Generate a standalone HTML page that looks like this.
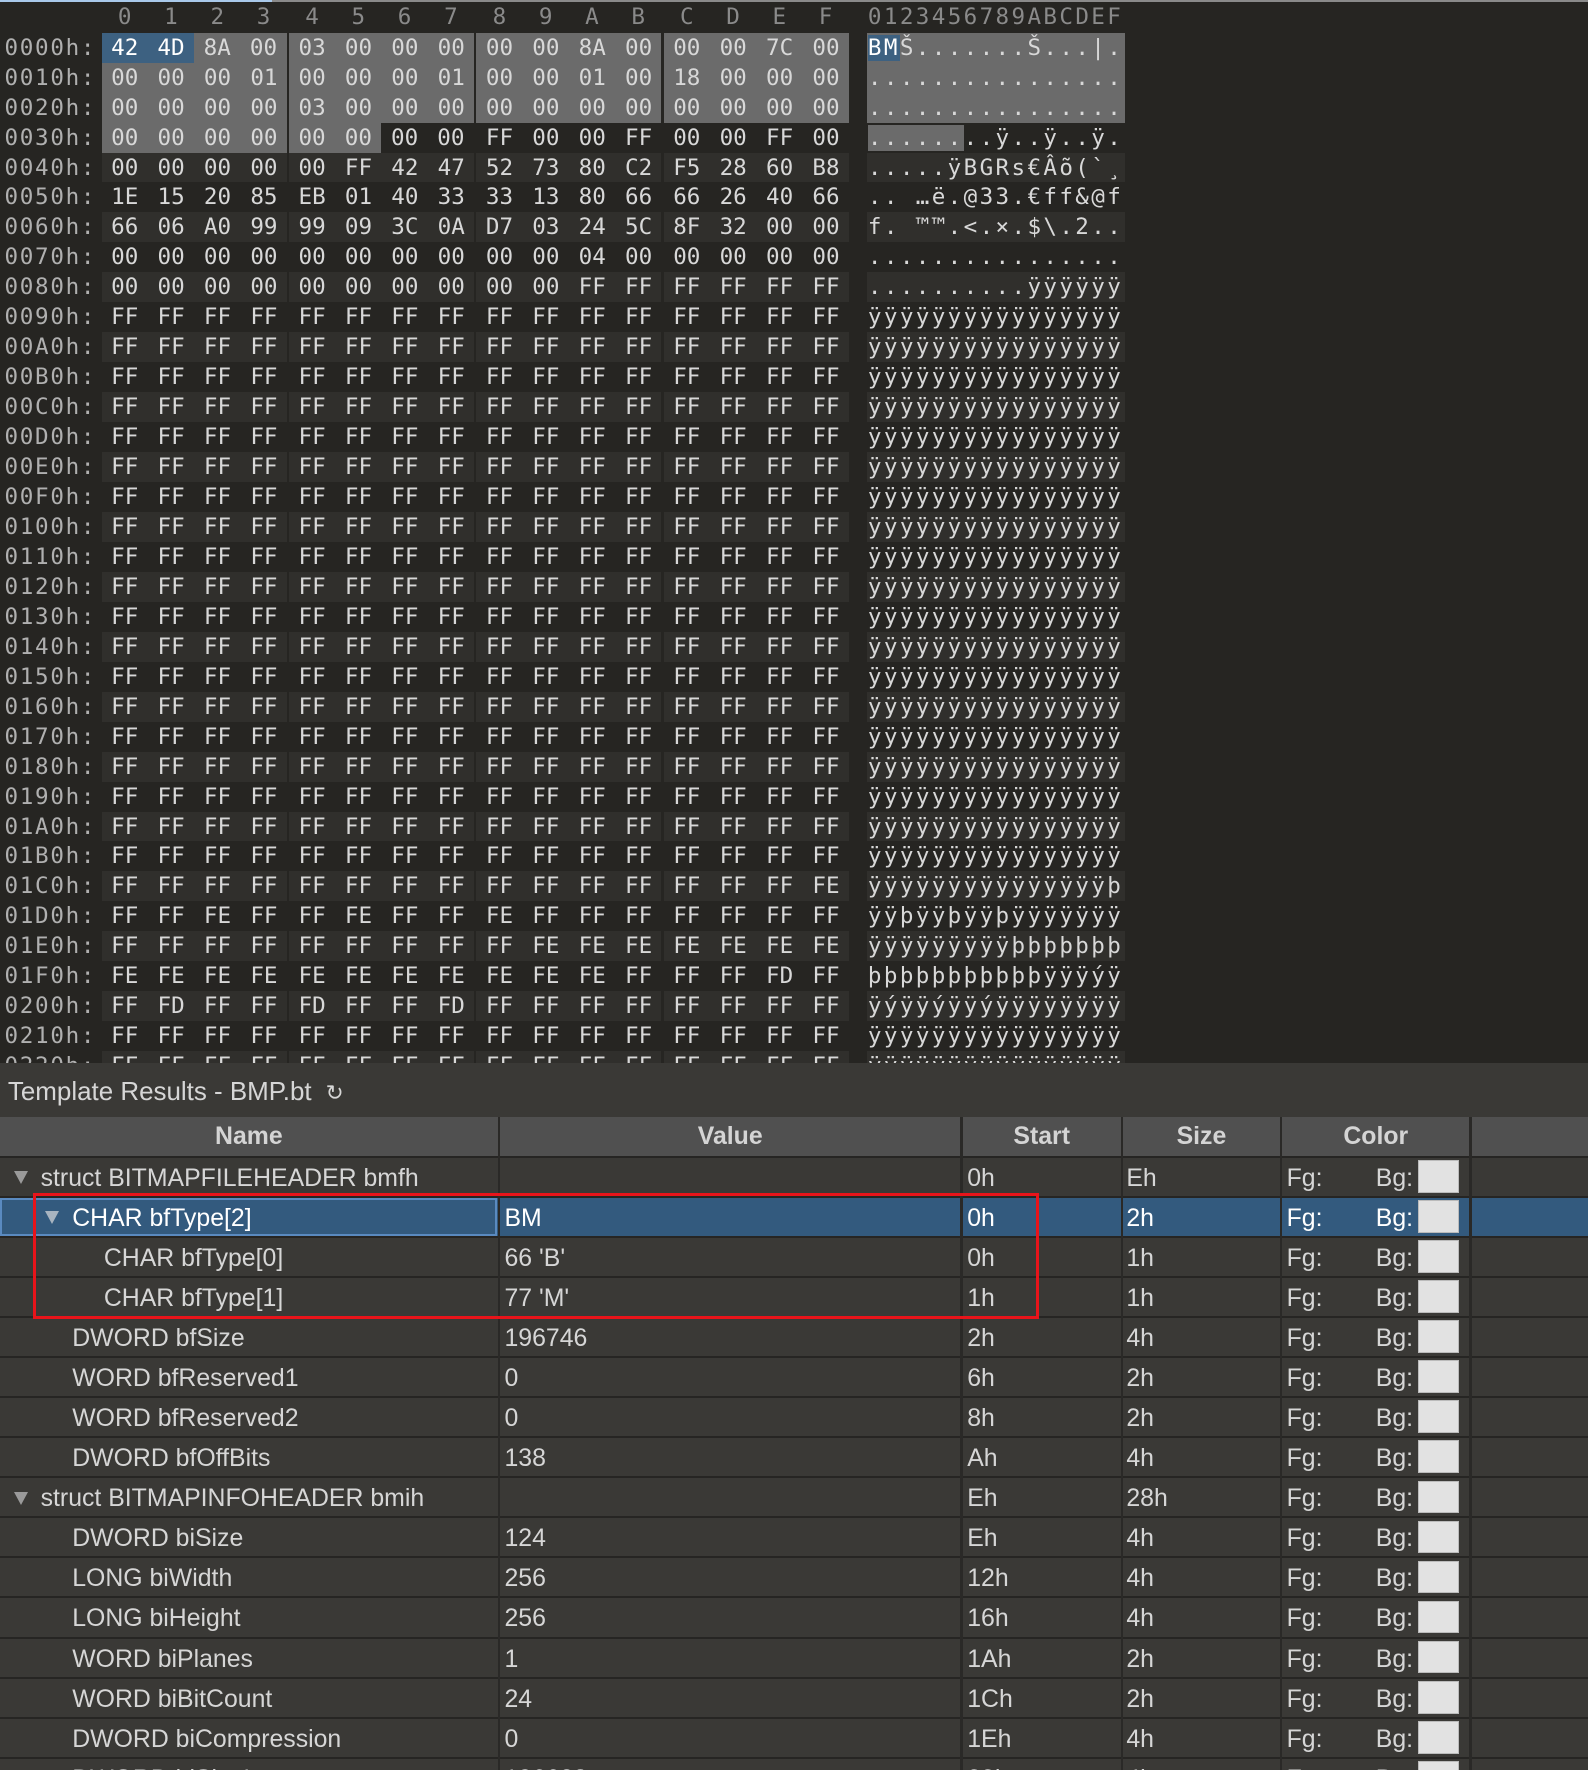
<!DOCTYPE html>
<html><head><meta charset="utf-8">
<style>
html,body{margin:0;padding:0;background:#3a3936;overflow:hidden}
body{width:1407px;height:1568px;zoom:1.12864;position:relative;font-family:"Liberation Sans",sans-serif}
#hex{position:absolute;left:0;top:0;width:1407px;height:942px;background:#262522;overflow:hidden;font-family:"DejaVu Sans Mono","Liberation Mono",monospace;font-size:20px;color:#d8d8d8}
#topline{position:absolute;left:0;top:0;height:2px;width:1407px;background:#8a8a8a}
#topline i{position:absolute;left:0;top:0;height:2px;width:241px;background:#a9c9ea}
.hdr{position:absolute;top:0;height:28px;line-height:31px;color:#8a8a8a}
.hdr span{position:absolute;width:41px;text-align:center}
#rows{position:absolute;left:0;top:29px}
.r{position:relative;height:26.55px;line-height:28px;white-space:pre}
.a{position:absolute;left:4px;color:#b0b0b0;letter-spacing:1.5px}
.g{position:absolute;width:164px;padding-left:8.5px;box-sizing:border-box;word-spacing:5px;height:26.55px}
.g0{left:90px}.g1{left:256px}.g2{left:422px}.g3{left:588px}
.s{position:absolute;left:768px;width:228px;padding-left:1px;letter-spacing:2.1px;height:26.55px}
.e .g,.e .s{background:#302f2c}
.h .g,.h .s{background:#6b6b6b}
.b{position:absolute;top:0;height:26.55px;width:41px;text-align:center;word-spacing:0}
.gy{background:#6b6b6b}.bl{background:#3d6181;color:#fff}.dk{background:#302f2c}
#title{position:absolute;left:7px;top:955px;font-size:23px;color:#d6d6d6}
#tbl{position:absolute;left:0;top:990px;width:1407px}
.th{position:absolute;top:0;height:34px;line-height:35px;background:#505050;font-weight:bold;font-size:22px;color:#d4d4d4;text-align:center}
.tr{position:absolute;left:0;width:1407px;height:33.5px;line-height:37px;font-size:22px;color:#d6d6d6;border-top:2px solid #262523}
.tr span{position:absolute;top:0}
.tri{display:inline-block;width:0;height:0;border-left:7px solid transparent;border-right:7px solid transparent;border-top:12px solid #9a9a9a;position:absolute;top:12px}
.sw{position:absolute;left:1256px;top:2px;width:37px;height:29px;background:#e2e2e2;border:1px solid #bbb;box-sizing:border-box}
.vl{position:absolute;top:0;width:2px;height:578px;background:#2a2927}
.sel{background:#335a7e;color:#fff}
</style></head><body>
<div id="hex">
<div id="topline"><i></i></div>
<div class="hdr" style="left:90px;width:700px">
<span style="left:0">0</span><span style="left:41px">1</span><span style="left:82px">2</span><span style="left:123px">3</span>
<span style="left:166px">4</span><span style="left:207px">5</span><span style="left:248px">6</span><span style="left:289px">7</span>
<span style="left:332px">8</span><span style="left:373px">9</span><span style="left:414px">A</span><span style="left:455px">B</span>
<span style="left:498px">C</span><span style="left:539px">D</span><span style="left:580px">E</span><span style="left:621px">F</span>
</div>
<div class="hdr" style="left:769px;letter-spacing:2.1px">0123456789ABCDEF</div>
<div id="rows">
<div class="r h"><span class="a">0000h:</span><span class="g g0"><span class="b bl" style="left:0">42</span><span class="b bl" style="left:41px">4D</span><span class="b" style="left:82px">8A</span><span class="b" style="left:123px">00</span></span><span class="g g1">03 00 00 00</span><span class="g g2">00 00 8A 00</span><span class="g g3">00 00 7C 00</span><span class="s"><span style="background:#3d6181;color:#fff">BM</span>Š.......Š...|.</span></div>
<div class="r h"><span class="a">0010h:</span><span class="g g0">00 00 00 01</span><span class="g g1">00 00 00 01</span><span class="g g2">00 00 01 00</span><span class="g g3">18 00 00 00</span><span class="s">................</span></div>
<div class="r h"><span class="a">0020h:</span><span class="g g0">00 00 00 00</span><span class="g g1">03 00 00 00</span><span class="g g2">00 00 00 00</span><span class="g g3">00 00 00 00</span><span class="s">................</span></div>
<div class="r"><span class="a">0030h:</span><span class="g g0 gy">00 00 00 00</span><span class="g g1"><span class="b gy" style="left:0">00</span><span class="b gy" style="left:41px">00</span><span class="b" style="left:82px">00</span><span class="b" style="left:123px">00</span></span><span class="g g2">FF 00 00 FF</span><span class="g g3">00 00 FF 00</span><span class="s"><span style="background:#6b6b6b">......</span>..ÿ..ÿ..ÿ.</span></div>
<div class="r e"><span class="a">0040h:</span><span class="g g0">00 00 00 00</span><span class="g g1">00 FF 42 47</span><span class="g g2">52 73 80 C2</span><span class="g g3">F5 28 60 B8</span><span class="s">.....ÿBGRs€Âõ(`¸</span></div>
<div class="r"><span class="a">0050h:</span><span class="g g0">1E 15 20 85</span><span class="g g1">EB 01 40 33</span><span class="g g2">33 13 80 66</span><span class="g g3">66 26 40 66</span><span class="s">.. …ë.@33.€ff&amp;@f</span></div>
<div class="r e"><span class="a">0060h:</span><span class="g g0">66 06 A0 99</span><span class="g g1">99 09 3C 0A</span><span class="g g2">D7 03 24 5C</span><span class="g g3">8F 32 00 00</span><span class="s">f. ™™.&lt;.×.$\.2..</span></div>
<div class="r"><span class="a">0070h:</span><span class="g g0">00 00 00 00</span><span class="g g1">00 00 00 00</span><span class="g g2">00 00 04 00</span><span class="g g3">00 00 00 00</span><span class="s">................</span></div>
<div class="r e"><span class="a">0080h:</span><span class="g g0">00 00 00 00</span><span class="g g1">00 00 00 00</span><span class="g g2">00 00 FF FF</span><span class="g g3">FF FF FF FF</span><span class="s">..........ÿÿÿÿÿÿ</span></div>
<div class="r"><span class="a">0090h:</span><span class="g g0">FF FF FF FF</span><span class="g g1">FF FF FF FF</span><span class="g g2">FF FF FF FF</span><span class="g g3">FF FF FF FF</span><span class="s">ÿÿÿÿÿÿÿÿÿÿÿÿÿÿÿÿ</span></div>
<div class="r e"><span class="a">00A0h:</span><span class="g g0">FF FF FF FF</span><span class="g g1">FF FF FF FF</span><span class="g g2">FF FF FF FF</span><span class="g g3">FF FF FF FF</span><span class="s">ÿÿÿÿÿÿÿÿÿÿÿÿÿÿÿÿ</span></div>
<div class="r"><span class="a">00B0h:</span><span class="g g0">FF FF FF FF</span><span class="g g1">FF FF FF FF</span><span class="g g2">FF FF FF FF</span><span class="g g3">FF FF FF FF</span><span class="s">ÿÿÿÿÿÿÿÿÿÿÿÿÿÿÿÿ</span></div>
<div class="r e"><span class="a">00C0h:</span><span class="g g0">FF FF FF FF</span><span class="g g1">FF FF FF FF</span><span class="g g2">FF FF FF FF</span><span class="g g3">FF FF FF FF</span><span class="s">ÿÿÿÿÿÿÿÿÿÿÿÿÿÿÿÿ</span></div>
<div class="r"><span class="a">00D0h:</span><span class="g g0">FF FF FF FF</span><span class="g g1">FF FF FF FF</span><span class="g g2">FF FF FF FF</span><span class="g g3">FF FF FF FF</span><span class="s">ÿÿÿÿÿÿÿÿÿÿÿÿÿÿÿÿ</span></div>
<div class="r e"><span class="a">00E0h:</span><span class="g g0">FF FF FF FF</span><span class="g g1">FF FF FF FF</span><span class="g g2">FF FF FF FF</span><span class="g g3">FF FF FF FF</span><span class="s">ÿÿÿÿÿÿÿÿÿÿÿÿÿÿÿÿ</span></div>
<div class="r"><span class="a">00F0h:</span><span class="g g0">FF FF FF FF</span><span class="g g1">FF FF FF FF</span><span class="g g2">FF FF FF FF</span><span class="g g3">FF FF FF FF</span><span class="s">ÿÿÿÿÿÿÿÿÿÿÿÿÿÿÿÿ</span></div>
<div class="r e"><span class="a">0100h:</span><span class="g g0">FF FF FF FF</span><span class="g g1">FF FF FF FF</span><span class="g g2">FF FF FF FF</span><span class="g g3">FF FF FF FF</span><span class="s">ÿÿÿÿÿÿÿÿÿÿÿÿÿÿÿÿ</span></div>
<div class="r"><span class="a">0110h:</span><span class="g g0">FF FF FF FF</span><span class="g g1">FF FF FF FF</span><span class="g g2">FF FF FF FF</span><span class="g g3">FF FF FF FF</span><span class="s">ÿÿÿÿÿÿÿÿÿÿÿÿÿÿÿÿ</span></div>
<div class="r e"><span class="a">0120h:</span><span class="g g0">FF FF FF FF</span><span class="g g1">FF FF FF FF</span><span class="g g2">FF FF FF FF</span><span class="g g3">FF FF FF FF</span><span class="s">ÿÿÿÿÿÿÿÿÿÿÿÿÿÿÿÿ</span></div>
<div class="r"><span class="a">0130h:</span><span class="g g0">FF FF FF FF</span><span class="g g1">FF FF FF FF</span><span class="g g2">FF FF FF FF</span><span class="g g3">FF FF FF FF</span><span class="s">ÿÿÿÿÿÿÿÿÿÿÿÿÿÿÿÿ</span></div>
<div class="r e"><span class="a">0140h:</span><span class="g g0">FF FF FF FF</span><span class="g g1">FF FF FF FF</span><span class="g g2">FF FF FF FF</span><span class="g g3">FF FF FF FF</span><span class="s">ÿÿÿÿÿÿÿÿÿÿÿÿÿÿÿÿ</span></div>
<div class="r"><span class="a">0150h:</span><span class="g g0">FF FF FF FF</span><span class="g g1">FF FF FF FF</span><span class="g g2">FF FF FF FF</span><span class="g g3">FF FF FF FF</span><span class="s">ÿÿÿÿÿÿÿÿÿÿÿÿÿÿÿÿ</span></div>
<div class="r e"><span class="a">0160h:</span><span class="g g0">FF FF FF FF</span><span class="g g1">FF FF FF FF</span><span class="g g2">FF FF FF FF</span><span class="g g3">FF FF FF FF</span><span class="s">ÿÿÿÿÿÿÿÿÿÿÿÿÿÿÿÿ</span></div>
<div class="r"><span class="a">0170h:</span><span class="g g0">FF FF FF FF</span><span class="g g1">FF FF FF FF</span><span class="g g2">FF FF FF FF</span><span class="g g3">FF FF FF FF</span><span class="s">ÿÿÿÿÿÿÿÿÿÿÿÿÿÿÿÿ</span></div>
<div class="r e"><span class="a">0180h:</span><span class="g g0">FF FF FF FF</span><span class="g g1">FF FF FF FF</span><span class="g g2">FF FF FF FF</span><span class="g g3">FF FF FF FF</span><span class="s">ÿÿÿÿÿÿÿÿÿÿÿÿÿÿÿÿ</span></div>
<div class="r"><span class="a">0190h:</span><span class="g g0">FF FF FF FF</span><span class="g g1">FF FF FF FF</span><span class="g g2">FF FF FF FF</span><span class="g g3">FF FF FF FF</span><span class="s">ÿÿÿÿÿÿÿÿÿÿÿÿÿÿÿÿ</span></div>
<div class="r e"><span class="a">01A0h:</span><span class="g g0">FF FF FF FF</span><span class="g g1">FF FF FF FF</span><span class="g g2">FF FF FF FF</span><span class="g g3">FF FF FF FF</span><span class="s">ÿÿÿÿÿÿÿÿÿÿÿÿÿÿÿÿ</span></div>
<div class="r"><span class="a">01B0h:</span><span class="g g0">FF FF FF FF</span><span class="g g1">FF FF FF FF</span><span class="g g2">FF FF FF FF</span><span class="g g3">FF FF FF FF</span><span class="s">ÿÿÿÿÿÿÿÿÿÿÿÿÿÿÿÿ</span></div>
<div class="r e"><span class="a">01C0h:</span><span class="g g0">FF FF FF FF</span><span class="g g1">FF FF FF FF</span><span class="g g2">FF FF FF FF</span><span class="g g3">FF FF FF FE</span><span class="s">ÿÿÿÿÿÿÿÿÿÿÿÿÿÿÿþ</span></div>
<div class="r"><span class="a">01D0h:</span><span class="g g0">FF FF FE FF</span><span class="g g1">FF FE FF FF</span><span class="g g2">FE FF FF FF</span><span class="g g3">FF FF FF FF</span><span class="s">ÿÿþÿÿþÿÿþÿÿÿÿÿÿÿ</span></div>
<div class="r e"><span class="a">01E0h:</span><span class="g g0">FF FF FF FF</span><span class="g g1">FF FF FF FF</span><span class="g g2">FF FE FE FE</span><span class="g g3">FE FE FE FE</span><span class="s">ÿÿÿÿÿÿÿÿÿþþþþþþþ</span></div>
<div class="r"><span class="a">01F0h:</span><span class="g g0">FE FE FE FE</span><span class="g g1">FE FE FE FE</span><span class="g g2">FE FE FE FF</span><span class="g g3">FF FF FD FF</span><span class="s">þþþþþþþþþþþÿÿÿýÿ</span></div>
<div class="r e"><span class="a">0200h:</span><span class="g g0">FF FD FF FF</span><span class="g g1">FD FF FF FD</span><span class="g g2">FF FF FF FF</span><span class="g g3">FF FF FF FF</span><span class="s">ÿýÿÿýÿÿýÿÿÿÿÿÿÿÿ</span></div>
<div class="r"><span class="a">0210h:</span><span class="g g0">FF FF FF FF</span><span class="g g1">FF FF FF FF</span><span class="g g2">FF FF FF FF</span><span class="g g3">FF FF FF FF</span><span class="s">ÿÿÿÿÿÿÿÿÿÿÿÿÿÿÿÿ</span></div>
<div class="r e"><span class="a">0220h:</span><span class="g g0">FF FF FF FF</span><span class="g g1">FF FF FF FF</span><span class="g g2">FF FF FF FF</span><span class="g g3">FF FF FF FF</span><span class="s">ÿÿÿÿÿÿÿÿÿÿÿÿÿÿÿÿ</span></div>
</div>
</div>

<div id="title">Template Results - BMP.bt <span style="font-size:19px;margin-left:6px">&#x21bb;</span></div>

<div id="tbl">
<div class="th" style="left:0;width:441px">Name</div>
<div class="th" style="left:443px;width:408px">Value</div>
<div class="th" style="left:853px;width:140px">Start</div>
<div class="th" style="left:995px;width:139px">Size</div>
<div class="th" style="left:1136px;width:166px">Color</div>
<div class="th" style="left:1304px;width:103px"></div>

<div class="tr" style="top:34px"><i class="tri" style="left:12px"></i><span style="left:36px">struct BITMAPFILEHEADER bmfh</span><span style="left:857px">0h</span><span style="left:998px">Eh</span><span style="left:1140px">Fg:</span><span style="left:1219px">Bg:</span><div class="sw"></div></div>
<div class="tr sel" style="top:69.5px"><div style="position:absolute;left:0;top:0;width:437px;height:30px;border:2px solid #5a8ac0"></div><i class="tri" style="left:40px;border-top-color:#a8b4c0"></i><span style="left:64px">CHAR bfType[2]</span><span style="left:447px">BM</span><span style="left:857px">0h</span><span style="left:998px">2h</span><span style="left:1140px">Fg:</span><span style="left:1219px">Bg:</span><div class="sw"></div></div>
<div class="tr" style="top:105px"><span style="left:92px">CHAR bfType[0]</span><span style="left:447px">66 'B'</span><span style="left:857px">0h</span><span style="left:998px">1h</span><span style="left:1140px">Fg:</span><span style="left:1219px">Bg:</span><div class="sw"></div></div>
<div class="tr" style="top:140.5px"><span style="left:92px">CHAR bfType[1]</span><span style="left:447px">77 'M'</span><span style="left:857px">1h</span><span style="left:998px">1h</span><span style="left:1140px">Fg:</span><span style="left:1219px">Bg:</span><div class="sw"></div></div>
<div class="tr" style="top:176px"><span style="left:64px">DWORD bfSize</span><span style="left:447px">196746</span><span style="left:857px">2h</span><span style="left:998px">4h</span><span style="left:1140px">Fg:</span><span style="left:1219px">Bg:</span><div class="sw"></div></div>
<div class="tr" style="top:211.5px"><span style="left:64px">WORD bfReserved1</span><span style="left:447px">0</span><span style="left:857px">6h</span><span style="left:998px">2h</span><span style="left:1140px">Fg:</span><span style="left:1219px">Bg:</span><div class="sw"></div></div>
<div class="tr" style="top:247px"><span style="left:64px">WORD bfReserved2</span><span style="left:447px">0</span><span style="left:857px">8h</span><span style="left:998px">2h</span><span style="left:1140px">Fg:</span><span style="left:1219px">Bg:</span><div class="sw"></div></div>
<div class="tr" style="top:282.5px"><span style="left:64px">DWORD bfOffBits</span><span style="left:447px">138</span><span style="left:857px">Ah</span><span style="left:998px">4h</span><span style="left:1140px">Fg:</span><span style="left:1219px">Bg:</span><div class="sw"></div></div>
<div class="tr" style="top:318px"><i class="tri" style="left:12px"></i><span style="left:36px">struct BITMAPINFOHEADER bmih</span><span style="left:857px">Eh</span><span style="left:998px">28h</span><span style="left:1140px">Fg:</span><span style="left:1219px">Bg:</span><div class="sw"></div></div>
<div class="tr" style="top:353.5px"><span style="left:64px">DWORD biSize</span><span style="left:447px">124</span><span style="left:857px">Eh</span><span style="left:998px">4h</span><span style="left:1140px">Fg:</span><span style="left:1219px">Bg:</span><div class="sw"></div></div>
<div class="tr" style="top:389px"><span style="left:64px">LONG biWidth</span><span style="left:447px">256</span><span style="left:857px">12h</span><span style="left:998px">4h</span><span style="left:1140px">Fg:</span><span style="left:1219px">Bg:</span><div class="sw"></div></div>
<div class="tr" style="top:424.5px"><span style="left:64px">LONG biHeight</span><span style="left:447px">256</span><span style="left:857px">16h</span><span style="left:998px">4h</span><span style="left:1140px">Fg:</span><span style="left:1219px">Bg:</span><div class="sw"></div></div>
<div class="tr" style="top:460px"><span style="left:64px">WORD biPlanes</span><span style="left:447px">1</span><span style="left:857px">1Ah</span><span style="left:998px">2h</span><span style="left:1140px">Fg:</span><span style="left:1219px">Bg:</span><div class="sw"></div></div>
<div class="tr" style="top:495.5px"><span style="left:64px">WORD biBitCount</span><span style="left:447px">24</span><span style="left:857px">1Ch</span><span style="left:998px">2h</span><span style="left:1140px">Fg:</span><span style="left:1219px">Bg:</span><div class="sw"></div></div>
<div class="tr" style="top:531px"><span style="left:64px">DWORD biCompression</span><span style="left:447px">0</span><span style="left:857px">1Eh</span><span style="left:998px">4h</span><span style="left:1140px">Fg:</span><span style="left:1219px">Bg:</span><div class="sw"></div></div>
<div class="tr" style="top:566.5px"><span style="left:64px">DWORD biSizeImage</span><span style="left:447px">196608</span><span style="left:857px">22h</span><span style="left:998px">4h</span><span style="left:1140px">Fg:</span><span style="left:1219px">Bg:</span><div class="sw"></div></div>

<div class="vl" style="left:441px"></div>
<div class="vl" style="left:851px"></div>
<div class="vl" style="left:993px"></div>
<div class="vl" style="left:1134px"></div>
<div class="vl" style="left:1302px"></div>
</div>
<div style="position:absolute;left:29px;top:1057px;width:892px;height:112px;border:3px solid #e8141a;box-sizing:border-box"></div>
</body></html>
